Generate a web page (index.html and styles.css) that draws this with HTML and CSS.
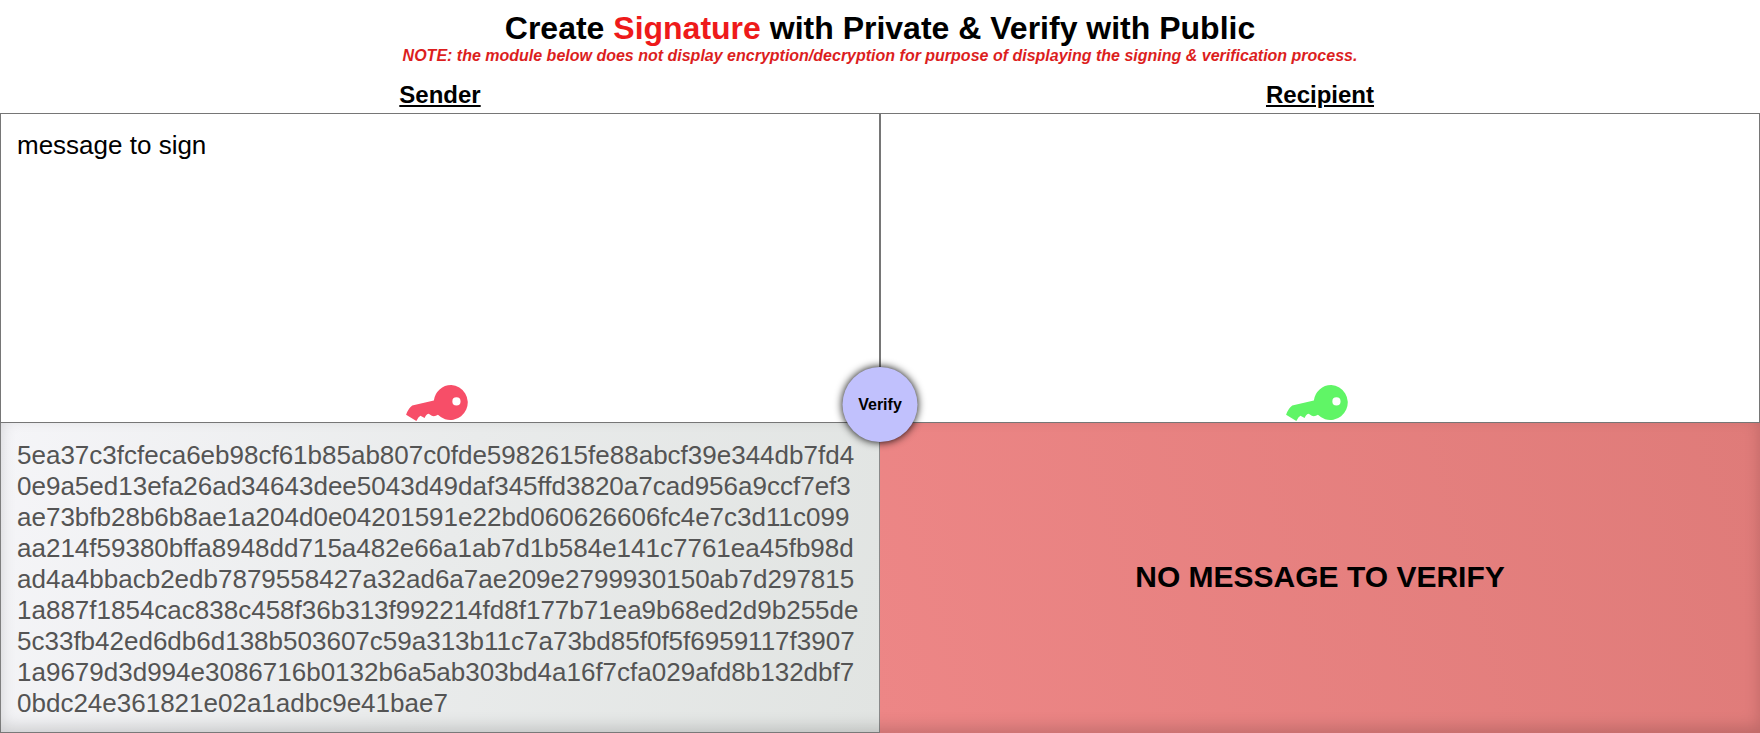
FILE: index.html
```html
<!DOCTYPE html>
<html lang="en">
<head>
<meta charset="utf-8">
<title>Create Signature with Private &amp; Verify with Public</title>
<link rel="stylesheet" href="styles.css">
</head>
<body>
<header class="header">
  <h1 class="title">Create <span class="accent">Signature</span> with Private &amp; Verify with Public</h1>
  <p class="note">NOTE: the module below does not display encryption/decryption for purpose of displaying the signing &amp; verification process.</p>
</header>
<main class="module">
  <div class="labels">
    <label class="label" for="sender">Sender</label>
    <label class="label" for="recipient">Recipient</label>
  </div>
  <div class="row">
    <div class="cell">
      <textarea class="box" id="sender" spellcheck="false">message to sign</textarea>
      <svg class="key key-private" viewBox="17 14 66 36" role="img" aria-label="Private key"><path fill-rule="evenodd" d="M61 15a17 17 0 1 1-13 29q-3 2-6 1l-3-2q-2 0-4 4l-4-2q-2 1-4 5L17 44Q19 38 23 35L44 30A17 17 0 0 1 61 15ZM66 27a4 4 0 1 0 0 8a4 4 0 1 0 0-8Z"/></svg>
    </div>
    <div class="cell">
      <textarea class="box" id="recipient" spellcheck="false"></textarea>
      <svg class="key key-public" viewBox="17 14 66 36" role="img" aria-label="Public key"><path fill-rule="evenodd" d="M61 15a17 17 0 1 1-13 29q-3 2-6 1l-3-2q-2 0-4 4l-4-2q-2 1-4 5L17 44Q19 38 23 35L44 30A17 17 0 0 1 61 15ZM66 27a4 4 0 1 0 0 8a4 4 0 1 0 0-8Z"/></svg>
    </div>
    <button class="verify" type="button">Verify</button>
  </div>
  <div class="row results">
    <textarea class="box signature" aria-label="Signature" disabled>5ea37c3fcfeca6eb98cf61b85ab807c0fde5982615fe88abcf39e344db7fd40e9a5ed13efa26ad34643dee5043d49daf345ffd3820a7cad956a9ccf7ef3ae73bfb28b6b8ae1a204d0e04201591e22bd060626606fc4e7c3d11c099aa214f59380bffa8948dd715a482e66a1ab7d1b584e141c7761ea45fb98dad4a4bbacb2edb7879558427a32ad6a7ae209e2799930150ab7d2978151a887f1854cac838c458f36b313f992214fd8f177b71ea9b68ed2d9b255de5c33fb42ed6db6d138b503607c59a313b11c7a73bd85f0f5f6959117f39071a9679d3d994e3086716b0132b6a5ab303bd4a16f7cfa029afd8b132dbf70bdc24e361821e02a1adbc9e41bae7</textarea>
    <div class="status" role="status">NO MESSAGE TO VERIFY</div>
  </div>
</main>
</body>
</html>
```
FILE: styles.css
```css
* {
  box-sizing: border-box;
}

body {
  margin: 0;
  min-height: 100vh;
  display: flex;
  flex-direction: column;
  background: #fff;
  color: #000;
  font-family: "Liberation Sans", Arial, sans-serif;
}

.header {
  padding-top: 10px;
  text-align: center;
}

.title {
  margin: 0;
  font-size: 32px;
  line-height: 37px;
}

.accent {
  color: #ee1a1a;
}

.note {
  margin: 0;
  color: #dc1e1e;
  font-size: 16px;
  font-style: italic;
  font-weight: bold;
  line-height: 18px;
}

.module {
  flex: 1;
  display: grid;
  grid-template-rows: auto 1fr 1fr;
  padding-top: 16px;
}

.labels,
.row {
  display: grid;
  grid-template-columns: 1fr 1fr;
}

.label {
  padding-bottom: 4px;
  font-size: 24px;
  font-weight: bold;
  line-height: 28px;
  text-align: center;
  text-decoration: underline;
}

.row {
  position: relative;
}

.cell {
  position: relative;
  display: grid;
}

.box {
  width: 100%;
  min-height: 310px;
  margin: 0;
  padding: 16px;
  border: 1px solid #767676;
  border-radius: 0;
  background: transparent;
  color: #000;
  font-family: inherit;
  font-size: 26px;
  line-height: 31px;
  resize: none;
  overflow: hidden;
  word-break: break-all;
}

.key {
  position: absolute;
  bottom: 2px;
  left: 50%;
  width: 68px;
  height: 37px;
  transform: translateX(-50%);
}

.key-private {
  fill: #f74e68;
}

.key-public {
  fill: #60f566;
}

.verify {
  position: absolute;
  z-index: 1;
  left: 50%;
  bottom: -19px;
  width: 75px;
  height: 75px;
  padding: 0;
  border: 0;
  border-radius: 50%;
  background: #c1c1fd;
  box-shadow: 0 0 8px #000;
  color: #000;
  font-family: inherit;
  font-size: 16px;
  font-weight: bold;
  transform: translateX(-50%);
}

.signature {
  padding-top: 17px;
  border-color: #8a8a8a;
  border-top: 0;
  background: linear-gradient(105deg, #f5f5f8, #e9ebeb 50%, #e1e4e2);
  color: #545454;
}

.status {
  display: flex;
  align-items: center;
  justify-content: center;
  padding-bottom: 2px;
  background: linear-gradient(75deg, #ed8686, #df7b79);
  font-size: 30px;
  font-weight: bold;
}

.results::after {
  content: "";
  position: absolute;
  inset: 0;
  box-shadow: inset 0 -6px 16px rgba(0, 0, 0, 0.16);
  pointer-events: none;
}
```
